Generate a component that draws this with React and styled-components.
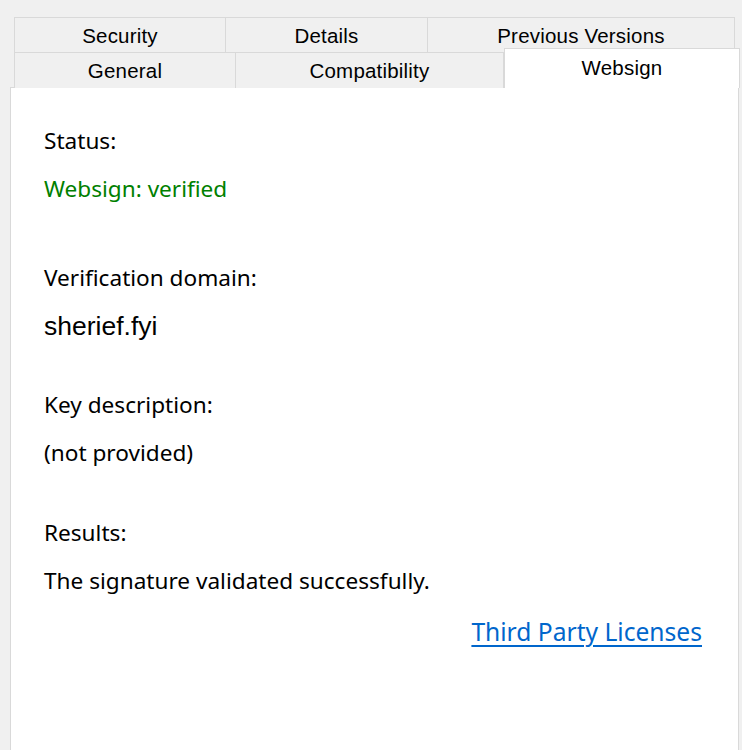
import React from "react";
import styled, { createGlobalStyle } from "styled-components";

const GlobalStyle = createGlobalStyle`
  html, body {
    margin: 0;
    padding: 0;
    background: #f0f0f0;
    overflow: hidden;
  }
`;

const Window = styled.div`
  width: 742px;
  height: 750px;
  background: #f0f0f0;
  padding: 17px 2px 0 10px;
  box-sizing: border-box;
  display: flex;
  flex-direction: column;
`;

const TabStrip = styled.div`
  display: flex;
  flex-direction: column;
  position: relative;
  z-index: 1;
`;

const TabRow = styled.div`
  display: grid;
  grid-template-columns: ${({ $cols }) => $cols};
  margin: ${({ $margin }) => $margin};
  height: 35px;
`;

const Tab = styled.div`
  display: flex;
  align-items: center;
  justify-content: center;
  box-sizing: border-box;
  border: 1px solid #d9d9d9;
  border-left: ${({ $first }) => ($first ? "1px solid #d9d9d9" : "none")};
  border-bottom: none;
  background: #f0f0f0;
  font-family: "Liberation Sans", Arial, sans-serif;
  font-size: 20.5px;
  letter-spacing: 0.2px;
  color: #000;
  padding-top: 1px;
`;

const ActiveTab = styled(Tab)`
  background: #fff;
  border-left: 1px solid #d9d9d9;
  border-bottom: none;
  margin-top: -4px;
  height: 40px;
  align-items: flex-start;
  padding-top: 7px;
`;

const Panel = styled.div`
  flex: 1;
  background: #fff;
  border: 1px solid #d9d9d9;
  border-bottom: none;
  margin-right: 1px;
  padding: 38px 36px 0 33px;
  display: flex;
  flex-direction: column;
  font-family: "Noto Sans", "Segoe UI", sans-serif;
  font-size: 22.6px;
  color: #000;
`;

const Section = styled.div`
  display: flex;
  flex-direction: column;
  gap: 18px;
  margin-bottom: ${({ $space }) => $space}px;
`;

const Line = styled.div`
  height: 30px;
  line-height: 30px;
  white-space: nowrap;
  color: ${({ $color }) => $color || "#000"};
  font-family: ${({ $arial }) =>
    $arial ? '"Liberation Sans", Arial, sans-serif' : "inherit"};
  font-size: ${({ $arial }) => ($arial ? "26.5px" : "inherit")};
`;

const Footer = styled.div`
  display: flex;
  justify-content: flex-end;
  margin-top: 21px;
`;

const Link = styled.a`
  color: #0066cc;
  font-size: 24.6px;
  line-height: 30px;
  text-decoration: underline;
  text-decoration-thickness: 2px;
  text-underline-offset: 4px;
  cursor: pointer;
`;

const fields = [
  { label: "Status:", value: "Websign: verified", color: "#008000", space: 59 },
  { label: "Verification domain:", value: "sherief.fyi", arial: true, space: 49 },
  { label: "Key description:", value: "(not provided)", space: 50 },
  { label: "Results:", value: "The signature validated successfully.", space: 0 },
];

export default function App() {
  return (
    <>
      <GlobalStyle />
      <Window>
        <TabStrip>
          <TabRow $cols="212px 202px 307px" $margin="0 5px 0 4px">
            <Tab $first>Security</Tab>
            <Tab>Details</Tab>
            <Tab>Previous Versions</Tab>
          </TabRow>
          <TabRow $cols="222px 268px 236px" $margin="0 0 0 4px">
            <Tab $first>General</Tab>
            <Tab>Compatibility</Tab>
            <ActiveTab>Websign</ActiveTab>
          </TabRow>
        </TabStrip>
        <Panel>
          {fields.map((f) => (
            <Section key={f.label} $space={f.space}>
              <Line>{f.label}</Line>
              <Line $color={f.color} $arial={f.arial}>
                {f.value}
              </Line>
            </Section>
          ))}
          <Footer>
            <Link>Third Party Licenses</Link>
          </Footer>
        </Panel>
      </Window>
    </>
  );
}
